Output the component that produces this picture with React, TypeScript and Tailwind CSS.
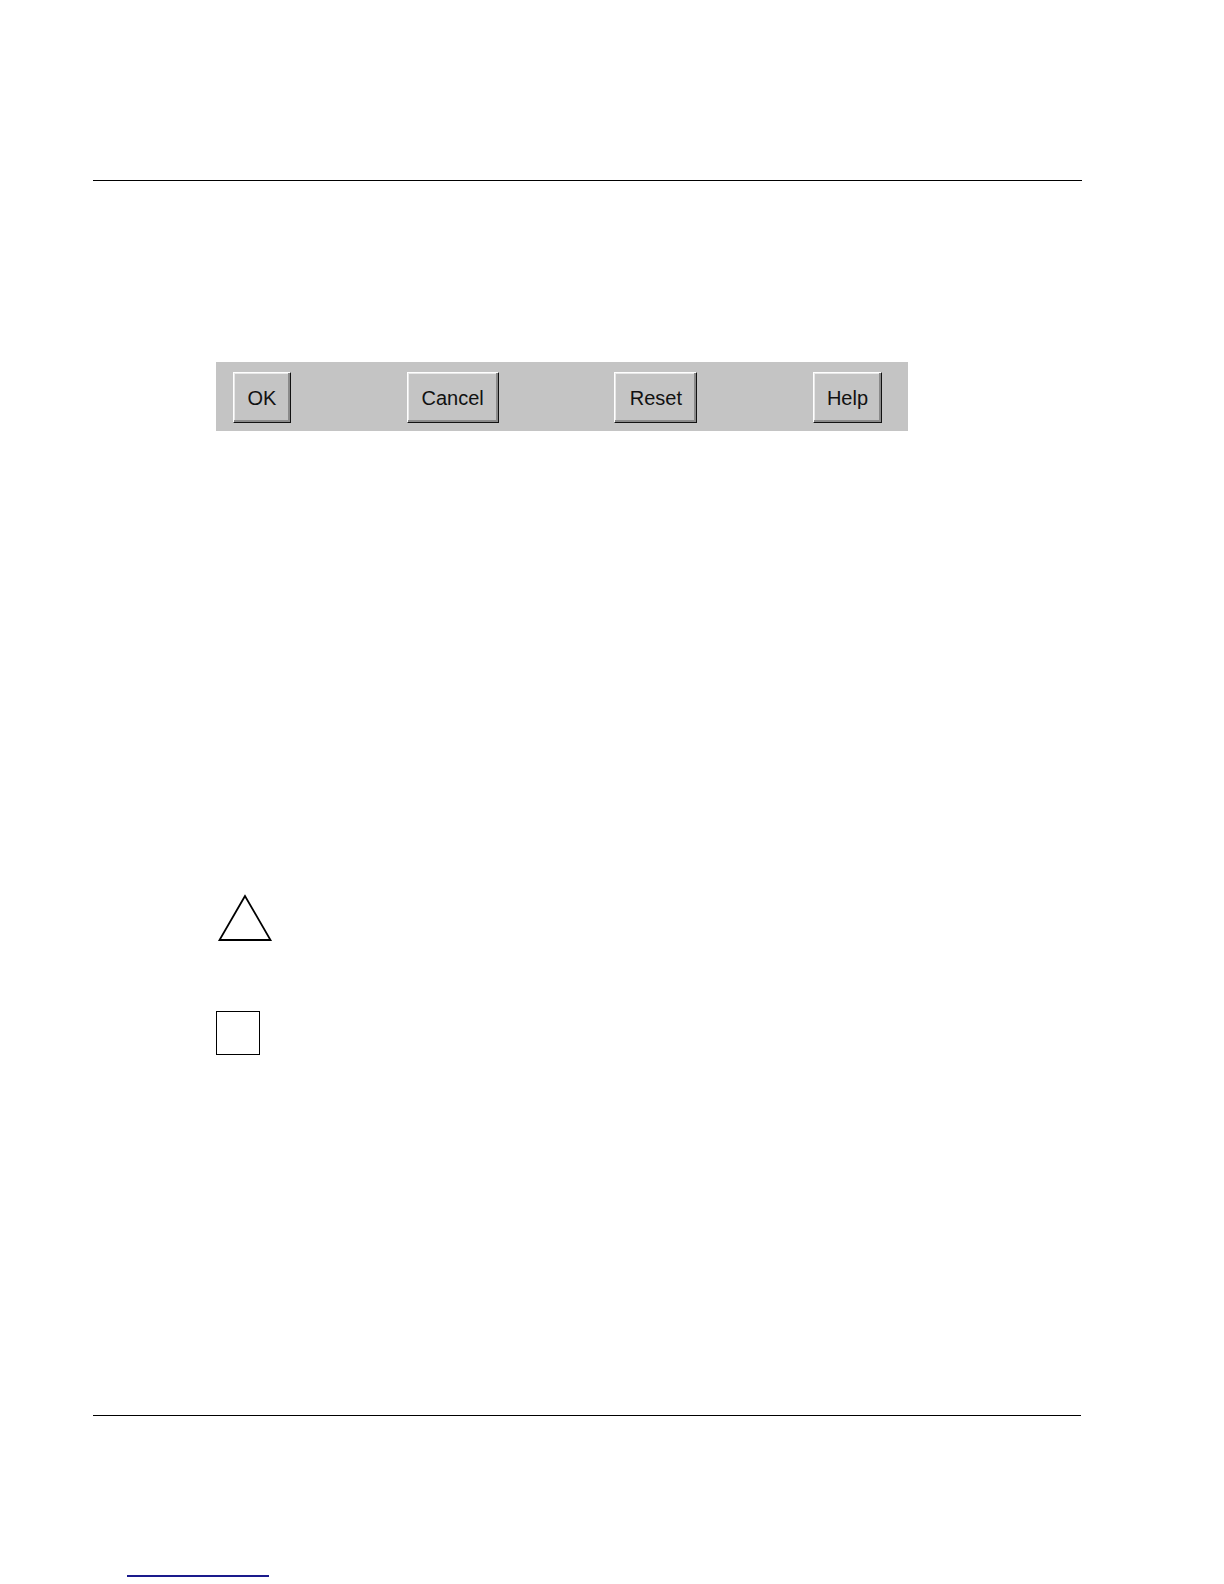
const buttons = [
  { label: "OK", width: "w-[58px]" },
  { label: "Cancel", width: "w-[92px]" },
  { label: "Reset", width: "w-[83px]" },
  { label: "Help", width: "w-[69px]" },
];

function BarButton({ label, width }: { label: string; width: string }) {
  return (
    <button
      type="button"
      className={`${width} h-[51px] border border-t-white border-l-white border-r-[#111] border-b-[#111] bg-[#c4c4c4] text-[20px] leading-none text-[#111] shadow-[inset_-2px_-2px_#8a8a8a,inset_1px_1px_#e8e8e8]`}
    >
      {label}
    </button>
  );
}

export default function App() {
  return (
    <div className="flex min-h-[1584px] w-[1224px] flex-col bg-white font-['Liberation_Sans',Arial,sans-serif]">
      <div className="ml-[93px] mt-[180px] h-px w-[989px] bg-black" />

      <div className="ml-[216px] mt-[181px] flex h-[69px] w-[692px] items-start justify-between bg-[#c4c4c4] pl-[17px] pr-[26px] pt-[10px]">
        {buttons.map((b) => (
          <BarButton key={b.label} label={b.label} width={b.width} />
        ))}
      </div>

      <svg
        className="ml-[216px] mt-[463px]"
        width="58"
        height="50"
        viewBox="0 0 58 50"
        fill="none"
      >
        <path
          d="M29 2 L3.5 46 L54.5 46 Z"
          stroke="#000"
          strokeWidth="1.8"
          strokeLinejoin="miter"
        />
      </svg>

      <div className="ml-[216px] mt-[67px] h-[44px] w-[44px] border border-black" />

      <div className="ml-[93px] mt-[360px] h-px w-[988px] bg-black" />

      <div className="ml-[127px] mt-[159px] h-[1.5px] w-[142px] bg-[#1a1a8c]" />
    </div>
  );
}
